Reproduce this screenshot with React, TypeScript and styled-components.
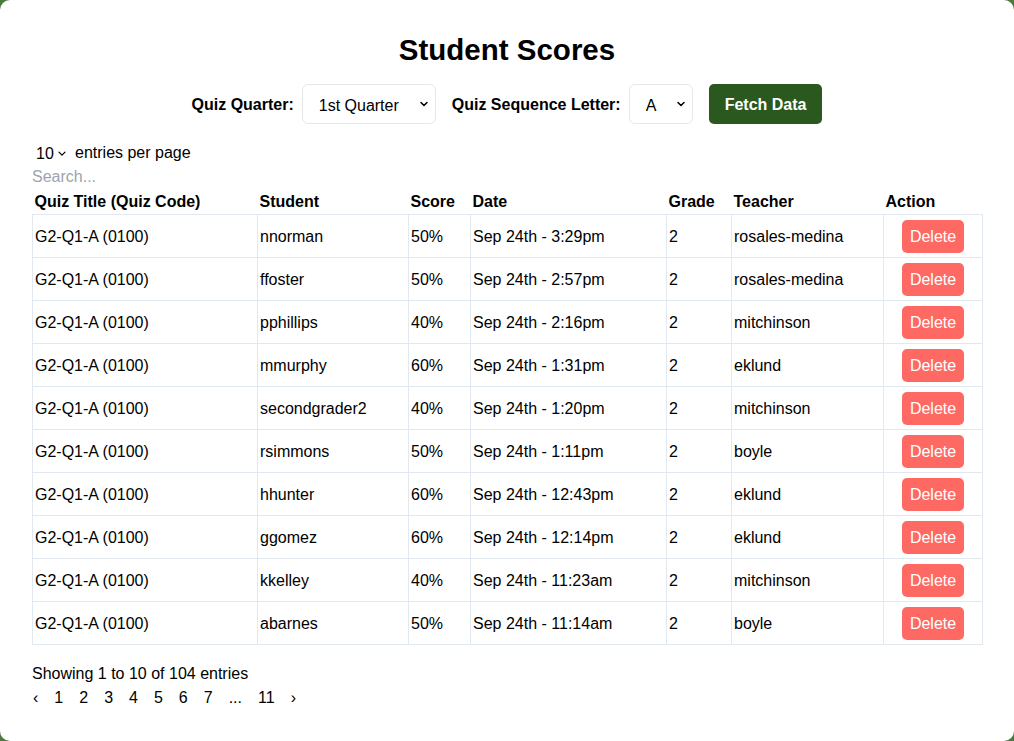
import React from "react";
import styled, { createGlobalStyle } from "styled-components";
import { ChevronDown } from "lucide-react";

const Global = createGlobalStyle`
  html, body { margin: 0; padding: 0; background: #4b7b3c; }
  body { font-family: "Liberation Sans", Arial, Helvetica, sans-serif; color: #000; }
  * { box-sizing: border-box; }
`;

const Card = styled.div`
  background: #fff;
  border-radius: 10px;
  min-height: 741px;
  padding: 32px 32px 20px;
  display: flex;
  flex-direction: column;
`;

const Title = styled.h1`
  margin: 0;
  font-size: 29.5px;
  line-height: 36px;
  font-weight: 700;
  text-align: center;
`;

const Controls = styled.div`
  margin-top: 16px;
  display: flex;
  justify-content: center;
  align-items: center;
  height: 40px;
`;

const Label = styled.label`
  font-size: 16px;
  font-weight: 700;
  margin-right: 8px;
  padding-top: 2px;
`;

const SelectWrap = styled.div<{ $w: number }>`
  position: relative;
  width: ${(p) => p.$w}px;
  height: 40px;
  margin-right: 16px;
`;

const Select = styled.select`
  appearance: none;
  -webkit-appearance: none;
  width: 100%;
  height: 100%;
  border: 1px solid #e5e7eb;
  border-radius: 6px;
  background: #fff;
  font-family: inherit;
  font-size: 16px;
  color: #000;
  padding: 2px 16px 0;
  outline: none;
`;

const Chevron = styled.span`
  position: absolute;
  right: 6px;
  top: 50%;
  transform: translateY(-50%);
  display: flex;
  pointer-events: none;
`;

const FetchButton = styled.button`
  height: 40px;
  padding: 2px 16px 0;
  background: #2a581f;
  color: #fff;
  border: none;
  border-radius: 5px;
  font-family: inherit;
  font-size: 16px;
  font-weight: 700;
`;

const EntriesRow = styled.div`
  margin-top: 16px;
  display: flex;
  align-items: center;
  font-size: 16px;
  line-height: 24px;
  padding: 2px 0 0 4px;
  height: 24px;
`;

const SmallSelectWrap = styled.div`
  position: relative;
  display: flex;
  align-items: center;
  margin-right: 7px;
`;

const SmallSelect = styled.select`
  appearance: none;
  -webkit-appearance: none;
  border: none;
  background: transparent;
  font-family: inherit;
  font-size: 16px;
  padding: 0 14px 0 0;
  color: #000;
  outline: none;
`;

const SmallChevron = styled.span`
  position: absolute;
  right: 0;
  top: 50%;
  transform: translateY(-45%);
  display: flex;
  pointer-events: none;
`;

const Search = styled.input`
  border: none;
  outline: none;
  padding: 2px 0 0;
  height: 24px;
  font-family: inherit;
  font-size: 16px;
  &::placeholder { color: #9ca3af; }
`;

const Table = styled.table`
  border-collapse: collapse;
  width: 950px;
  table-layout: fixed;
  font-size: 16px;
`;

const Th = styled.th`
  text-align: left;
  font-weight: 700;
  padding: 2px 2px 0;
  line-height: 24px;
  white-space: nowrap;
`;

const Td = styled.td<{ $center?: boolean }>`
  border: 1px solid #e2e8f0;
  padding: 5px 2px 3px;
  line-height: 24px;
  height: 43px;
  text-align: ${(p) => (p.$center ? "center" : "left")};
  white-space: nowrap;
`;

const DeleteButton = styled.button`
  background: #fe6a63;
  color: #fff;
  border: none;
  border-radius: 5px;
  height: 33px;
  padding: 2px 8px 0;
  font-family: inherit;
  font-size: 16px;
  vertical-align: middle;
  position: relative;
  top: -1px;
`;

const Footer = styled.div`
  margin-top: 17px;
  font-size: 16px;
  line-height: 24px;
`;

const Pager = styled.div`
  display: flex;
  align-items: center;
  gap: 14px;
  font-size: 16px;
  line-height: 24px;
`;

const PageItem = styled.span`
  padding: 0 1px;
`;

const rows = [
  ["nnorman", "50%", "Sep 24th - 3:29pm", "rosales-medina"],
  ["ffoster", "50%", "Sep 24th - 2:57pm", "rosales-medina"],
  ["pphillips", "40%", "Sep 24th - 2:16pm", "mitchinson"],
  ["mmurphy", "60%", "Sep 24th - 1:31pm", "eklund"],
  ["secondgrader2", "40%", "Sep 24th - 1:20pm", "mitchinson"],
  ["rsimmons", "50%", "Sep 24th - 1:11pm", "boyle"],
  ["hhunter", "60%", "Sep 24th - 12:43pm", "eklund"],
  ["ggomez", "60%", "Sep 24th - 12:14pm", "eklund"],
  ["kkelley", "40%", "Sep 24th - 11:23am", "mitchinson"],
  ["abarnes", "50%", "Sep 24th - 11:14am", "boyle"],
];

const widths = [225, 151, 62, 196, 65, 152, 99];

export default function App() {
  return (
    <>
      <Global />
      <Card>
        <Title>Student Scores</Title>
        <Controls>
          <Label>Quiz Quarter:</Label>
          <SelectWrap $w={134}>
            <Select defaultValue="1">
              <option value="1">1st Quarter</option>
              <option value="2">2nd Quarter</option>
              <option value="3">3rd Quarter</option>
              <option value="4">4th Quarter</option>
            </Select>
            <Chevron>
              <ChevronDown size={12} strokeWidth={3} />
            </Chevron>
          </SelectWrap>
          <Label>Quiz Sequence Letter:</Label>
          <SelectWrap $w={64}>
            <Select defaultValue="A">
              <option>A</option>
              <option>B</option>
              <option>C</option>
            </Select>
            <Chevron>
              <ChevronDown size={12} strokeWidth={3} />
            </Chevron>
          </SelectWrap>
          <FetchButton>Fetch Data</FetchButton>
        </Controls>
        <EntriesRow>
          <SmallSelectWrap>
            <SmallSelect defaultValue="10">
              <option>5</option>
              <option>10</option>
              <option>25</option>
            </SmallSelect>
            <SmallChevron>
              <ChevronDown size={12} strokeWidth={2.5} />
            </SmallChevron>
          </SmallSelectWrap>
          entries per page
        </EntriesRow>
        <Search placeholder="Search..." />
        <Table>
          <colgroup>
            {widths.map((w, i) => (
              <col key={i} style={{ width: w }} />
            ))}
          </colgroup>
          <thead>
            <tr>
              <Th>Quiz Title (Quiz Code)</Th>
              <Th>Student</Th>
              <Th>Score</Th>
              <Th>Date</Th>
              <Th>Grade</Th>
              <Th>Teacher</Th>
              <Th>Action</Th>
            </tr>
          </thead>
          <tbody>
            {rows.map((r, i) => (
              <tr key={i}>
                <Td>G2-Q1-A (0100)</Td>
                <Td>{r[0]}</Td>
                <Td>{r[1]}</Td>
                <Td>{r[2]}</Td>
                <Td>2</Td>
                <Td>{r[3]}</Td>
                <Td $center>
                  <DeleteButton>Delete</DeleteButton>
                </Td>
              </tr>
            ))}
          </tbody>
        </Table>
        <Footer>Showing 1 to 10 of 104 entries</Footer>
        <Pager>
          <PageItem>‹</PageItem>
          {["1", "2", "3", "4", "5", "6", "7", "...", "11"].map((p) => (
            <PageItem key={p}>{p}</PageItem>
          ))}
          <PageItem>›</PageItem>
        </Pager>
      </Card>
    </>
  );
}
